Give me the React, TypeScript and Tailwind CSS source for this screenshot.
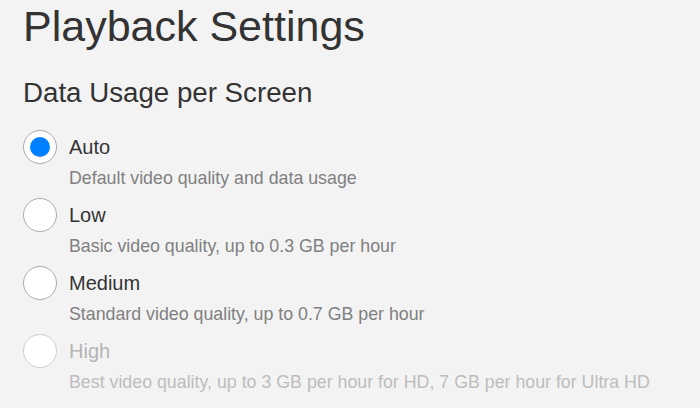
const options = [
  { id: "auto", label: "Auto", desc: "Default video quality and data usage", checked: true },
  { id: "low", label: "Low", desc: "Basic video quality, up to 0.3 GB per hour" },
  { id: "medium", label: "Medium", desc: "Standard video quality, up to 0.7 GB per hour" },
  {
    id: "high",
    label: "High",
    desc: "Best video quality, up to 3 GB per hour for HD, 7 GB per hour for Ultra HD",
    disabled: true,
  },
];

type Option = {
  id: string;
  label: string;
  desc: string;
  checked?: boolean;
  disabled?: boolean;
};

const RadioRow = ({ option }: { option: Option }) => {
  return (
    <div className="flex flex-col">
      <div className="flex items-center h-[34px]">
        <div
          className={
            option.disabled
              ? "w-[34px] h-[34px] rounded-full border border-[#cfcfcf] bg-white flex items-center justify-center shrink-0"
              : "w-[34px] h-[34px] rounded-full border border-[#adadad] bg-white flex items-center justify-center shrink-0"
          }
        >
          {option.checked && <div className="w-[20px] h-[20px] rounded-full bg-[#0080ff]"></div>}
        </div>
        <span
          className={
            option.disabled
              ? "ml-[12px] text-[20px] leading-[34px] text-[#b5b5b5]"
              : "ml-[12px] text-[20px] leading-[34px] text-[#333333]"
          }
        >
          {option.label}
        </span>
      </div>
      <p
        className={
          option.disabled
            ? "ml-[46px] mt-[2px] text-[17.8px] leading-[24px] text-[#bdbdbd]"
            : "ml-[46px] mt-[2px] text-[17.8px] leading-[24px] text-[#808080]"
        }
      >
        {option.desc}
      </p>
    </div>
  );
};

const App = () => {
  return (
    <div
      className="w-[700px] h-[408px] overflow-hidden bg-[#f3f3f3] pl-[23px] pt-[2px]"
      style={{ fontFamily: '"Liberation Sans", Arial, sans-serif' }}
    >
      <h1 className="text-[43px] leading-[48px] text-[#333333]">Playback Settings</h1>
      <h2 className="mt-[27px] text-[27.7px] leading-[32px] text-[#333333]">Data Usage per Screen</h2>
      <div className="mt-[21px] flex flex-col gap-[8px]">
        {options.map((o) => (
          <RadioRow key={o.id} option={o} />
        ))}
      </div>
    </div>
  );
};

export default App;
